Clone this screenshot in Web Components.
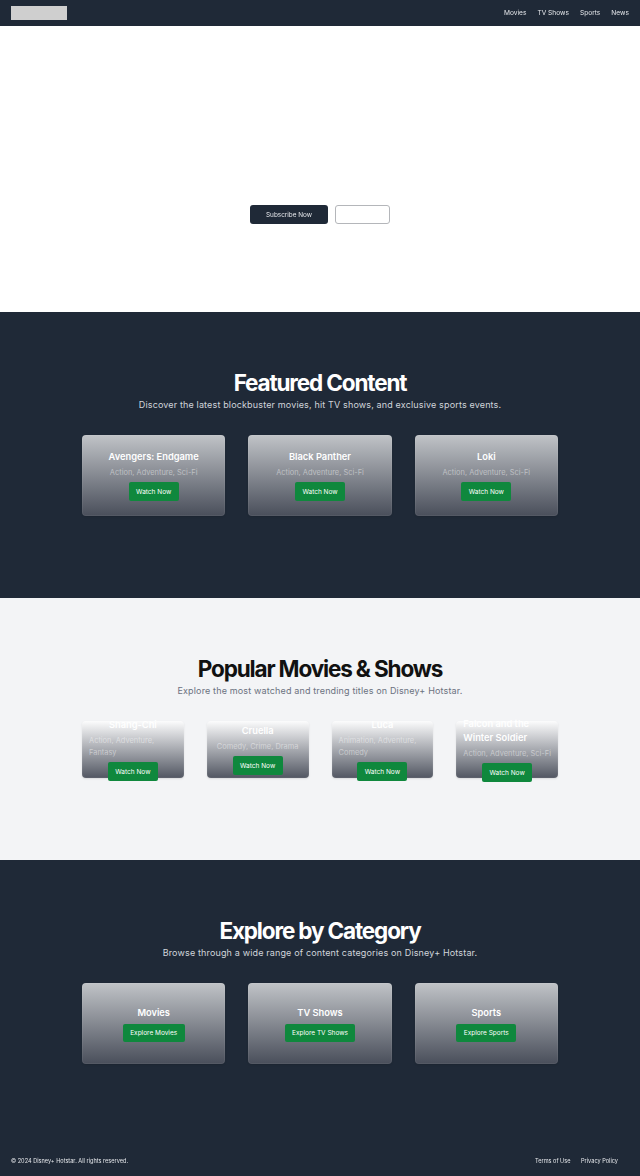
<!DOCTYPE html>
<html lang="en">
<head>
<meta charset="utf-8">
<title>Disney+ Hotstar</title>
<style>
  html, body { margin: 0; padding: 0; }
  body { font-family: "Inter", "Liberation Sans", sans-serif; background: #fff; }
</style>
</head>
<body>
<site-header></site-header>
<hero-banner></hero-banner>

<content-section theme="dark" heading="Featured Content" sub="Discover the latest blockbuster movies, hit TV shows, and exclusive sports events." cols="3">
  <media-card name="Avengers: Endgame" genre="Action, Adventure, Sci-Fi" action="Watch Now"></media-card>
  <media-card name="Black Panther" genre="Action, Adventure, Sci-Fi" action="Watch Now"></media-card>
  <media-card name="Loki" genre="Action, Adventure, Sci-Fi" action="Watch Now"></media-card>
</content-section>

<content-section theme="light" heading="Popular Movies &amp; Shows" sub="Explore the most watched and trending titles on Disney+ Hotstar." cols="4">
  <media-card short name="Shang-Chi" genre="Action, Adventure, Fantasy" action="Watch Now"></media-card>
  <media-card short name="Cruella" genre="Comedy, Crime, Drama" action="Watch Now"></media-card>
  <media-card short name="Luca" genre="Animation, Adventure, Comedy" action="Watch Now"></media-card>
  <media-card short name="Falcon and the Winter Soldier" genre="Action, Adventure, Sci-Fi" action="Watch Now"></media-card>
</content-section>

<content-section theme="dark" heading="Explore by Category" sub="Browse through a wide range of content categories on Disney+ Hotstar." cols="3">
  <media-card name="Movies" action="Explore Movies"></media-card>
  <media-card name="TV Shows" action="Explore TV Shows"></media-card>
  <media-card name="Sports" action="Explore Sports"></media-card>
</content-section>

<site-footer></site-footer>

<script>
class SiteHeader extends HTMLElement {
    constructor() {
        super();
        this.shadowDOM = this.attachShadow({mode: "open"});
    }

    connectedCallback() {
        this.shadowDOM.innerHTML = `
        <style>
        :host {
            display: flex;
            align-items: center;
            justify-content: space-between;
            height: 26px;
            padding: 0 11px;
            box-sizing: border-box;
            background: #1f2937;
        }
        .logo {
            width: 56px;
            height: 14px;
            background: #cfcfcf;
        }
        nav {
            display: flex;
            gap: 11px;
            font-size: 6.6px;
            color: #e5e7eb;
            will-change: transform;
        }
        </style>
        <div class="logo"></div>
        <nav>
            <span>Movies</span>
            <span>TV Shows</span>
            <span>Sports</span>
            <span>News</span>
        </nav>
        `;
    }
}

class HeroBanner extends HTMLElement {
    constructor() {
        super();
        this.shadowDOM = this.attachShadow({mode: "open"});
    }

    connectedCallback() {
        this.shadowDOM.innerHTML = `
        <style>
        :host {
            display: flex;
            align-items: flex-end;
            justify-content: center;
            gap: 7px;
            height: 286px;
            padding-bottom: 88px;
            box-sizing: border-box;
            background: #fff;
        }
        .btn {
            height: 19px;
            box-sizing: border-box;
            border-radius: 3px;
            display: flex;
            align-items: center;
            justify-content: center;
        }
        .primary {
            width: 78px;
            background: #1f2937;
            color: #e5e7eb;
            font-size: 6.4px;
        }
        .primary span {
            will-change: transform;
        }
        .outline {
            width: 55px;
            background: #fff;
            border: 1px solid #b4b6ba;
        }
        </style>
        <div class="btn primary"><span>Subscribe Now</span></div>
        <div class="btn outline"></div>
        `;
    }
}

class ContentSection extends HTMLElement {
    constructor() {
        super();
        this.shadowDOM = this.attachShadow({mode: "open"});
    }

    connectedCallback() {
        const dark = this.getAttribute("theme") === "dark";
        const cols = this.getAttribute("cols");
        this.shadowDOM.innerHTML = `
        <style>
        :host {
            display: block;
            box-sizing: border-box;
            padding: 55px 82px 82px;
            background: ${dark ? "#1f2937" : "#f3f4f6"};
            color: ${dark ? "#fff" : "#111"};
        }
        h2 {
            margin: 0;
            font-size: 22.5px;
            line-height: 32px;
            font-weight: 700;
            letter-spacing: -1.15px;
            text-align: center;
        }
        p {
            margin: 0 -40px 24px;
            font-size: 9px;
            line-height: 12px;
            letter-spacing: 0.15px;
            text-align: center;
            color: ${dark ? "#d1d5db" : "#6b7280"};
        }
        .grid {
            display: grid;
            grid-template-columns: repeat(${cols}, 1fr);
            gap: 23px;
        }
        </style>
        <h2>${this.getAttribute("heading").replace("&", "&amp;")}</h2>
        <p>${this.getAttribute("sub")}</p>
        <div class="grid"><slot></slot></div>
        `;
    }
}

class MediaCard extends HTMLElement {
    constructor() {
        super();
        this.shadowDOM = this.attachShadow({mode: "open"});
    }

    connectedCallback() {
        const genre = this.getAttribute("genre");
        this.shadowDOM.innerHTML = `
        <style>
        :host {
            display: flex;
            flex-direction: column;
            align-items: center;
            justify-content: center;
            height: ${this.hasAttribute("short") ? 57 : 81}px;
            padding: 0 7px;
            box-sizing: border-box;
            border-radius: 4px;
            background: linear-gradient(to bottom, rgba(255,255,255,.72), rgba(75,80,92,.96));
            box-shadow: inset 0 0 0 1px rgba(255,255,255,.06), 0 1px 2px rgba(0,0,0,.1);
            color: #fff;
        }
        h3 {
            margin: 0 0 ${genre ? 3 : 4}px;
            font-size: 9.3px;
            line-height: 14px;
            font-weight: 600;
        }
        p {
            margin: 0 0 3px;
            font-size: 7.45px;
            line-height: 12px;
            color: rgba(255,255,255,.45);
        }
        .btn {
            padding: 0 7.5px;
            height: ${genre ? 19 : 18}px;
            display: flex;
            align-items: center;
            flex: none;
            border-radius: 2px;
            background: #0f883d;
            font-size: 6.5px;
            white-space: nowrap;
        }
        </style>
        <h3>${this.getAttribute("name")}</h3>
        ${genre ? `<p>${genre}</p>` : ""}
        <div class="btn">${this.getAttribute("action")}</div>
        `;
    }
}

class SiteFooter extends HTMLElement {
    constructor() {
        super();
        this.shadowDOM = this.attachShadow({mode: "open"});
    }

    connectedCallback() {
        this.shadowDOM.innerHTML = `
        <style>
        :host {
            display: flex;
            align-items: center;
            justify-content: space-between;
            height: 30px;
            padding: 0 22px 0 11px;
            box-sizing: border-box;
            background: #1f2937;
            color: #e5e7eb;
            font-size: 5.6px;
        }
        span, nav {
            will-change: transform;
        }
        nav {
            display: flex;
            gap: 11px;
        }
        </style>
        <span>© 2024 Disney+ Hotstar. All rights reserved.</span>
        <nav>
            <span>Terms of Use</span>
            <span>Privacy Policy</span>
        </nav>
        `;
    }
}

customElements.define("site-header", SiteHeader);
customElements.define("hero-banner", HeroBanner);
customElements.define("content-section", ContentSection);
customElements.define("media-card", MediaCard);
customElements.define("site-footer", SiteFooter);
</script>
</body>
</html>
